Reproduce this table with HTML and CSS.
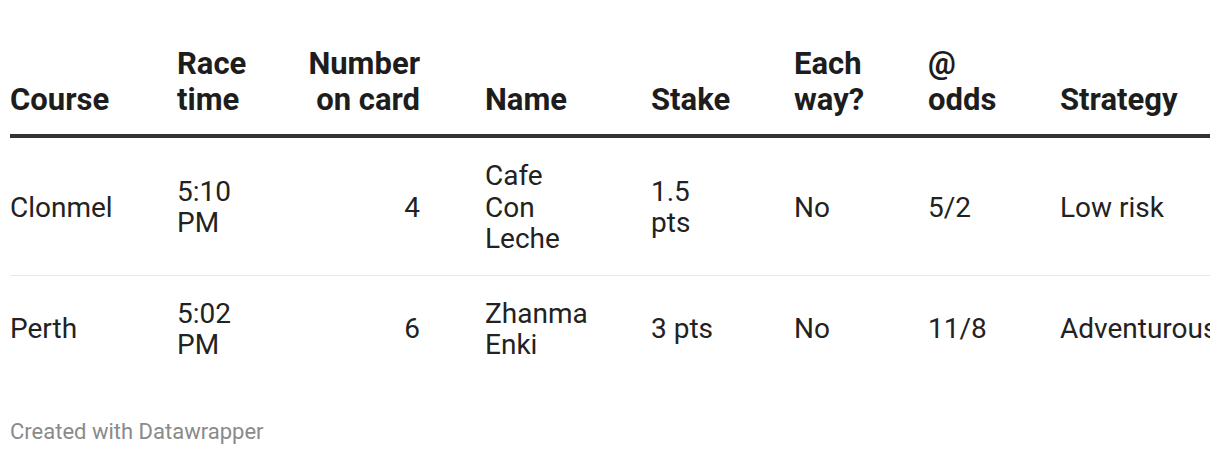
FILE: index.html
```html
<!DOCTYPE html>
<html>
<head>
<meta charset="utf-8">
<link rel="stylesheet" href="styles.css">
</head>
<body>
<div class="chart">
  <div class="table-wrap">
    <table class="bets">
      <colgroup>
        <col class="c-course">
        <col class="c-time">
        <col class="c-num">
        <col class="c-name">
        <col class="c-stake">
        <col class="c-each">
        <col class="c-odds">
        <col class="c-strat">
      </colgroup>
      <thead>
        <tr>
          <th>Course</th>
          <th>Race<br>time</th>
          <th class="num">Number<br>on card</th>
          <th>Name</th>
          <th>Stake</th>
          <th>Each<br>way?</th>
          <th>@<br>odds</th>
          <th>Strategy</th>
        </tr>
      </thead>
      <tbody>
        <tr>
          <td>Clonmel</td>
          <td>5:10<br>PM</td>
          <td class="num">4</td>
          <td>Cafe<br>Con<br>Leche</td>
          <td>1.5<br>pts</td>
          <td>No</td>
          <td>5/2</td>
          <td>Low risk</td>
        </tr>
        <tr>
          <td>Perth</td>
          <td>5:02<br>PM</td>
          <td class="num">6</td>
          <td>Zhanma<br>Enki</td>
          <td>3 pts</td>
          <td>No</td>
          <td>11/8</td>
          <td>Adventurous</td>
        </tr>
      </tbody>
    </table>
  </div>
  <div class="footer">Created with Datawrapper</div>
</div>
</body>
</html>
```

FILE: styles.css
```css
html, body {
  margin: 0;
  padding: 0;
  background: #ffffff;
}
body {
  font-family: Roboto, "Liberation Sans", sans-serif;
  color: #222222;
}
.chart {
  padding: 46px 10px 0 10px;
}
.table-wrap {
  width: 1200px;
  overflow: hidden;
}
.bets {
  width: 1250px;
  table-layout: fixed;
  border-collapse: collapse;
}
.c-course { width: 167px; }
.c-time { width: 120px; }
.c-num { width: 188px; }
.c-name { width: 166px; }
.c-stake { width: 143px; }
.c-each { width: 134px; }
.c-odds { width: 132px; }
.c-strat { width: 200px; }
.bets th, .bets td {
  box-sizing: border-box;
  padding: 0;
  text-align: left;
}
.bets th {
  font-weight: 700;
  font-size: 31px;
  line-height: 36px;
  vertical-align: bottom;
  padding-bottom: 16px;
  border-bottom: 4px solid #333333;
  color: #1d1d1d;
}
.bets td {
  font-size: 28px;
  line-height: 31.5px;
  vertical-align: middle;
  padding-top: 22px;
  padding-bottom: 20px;
  white-space: nowrap;
}
.bets tbody tr + tr td {
  border-top: 1px solid #e8e8e8;
}
.bets .num {
  text-align: right;
  padding-right: 65px;
}
.footer {
  margin-top: 38px;
  font-size: 22px;
  line-height: 26px;
  color: #8a8a8a;
}
```
